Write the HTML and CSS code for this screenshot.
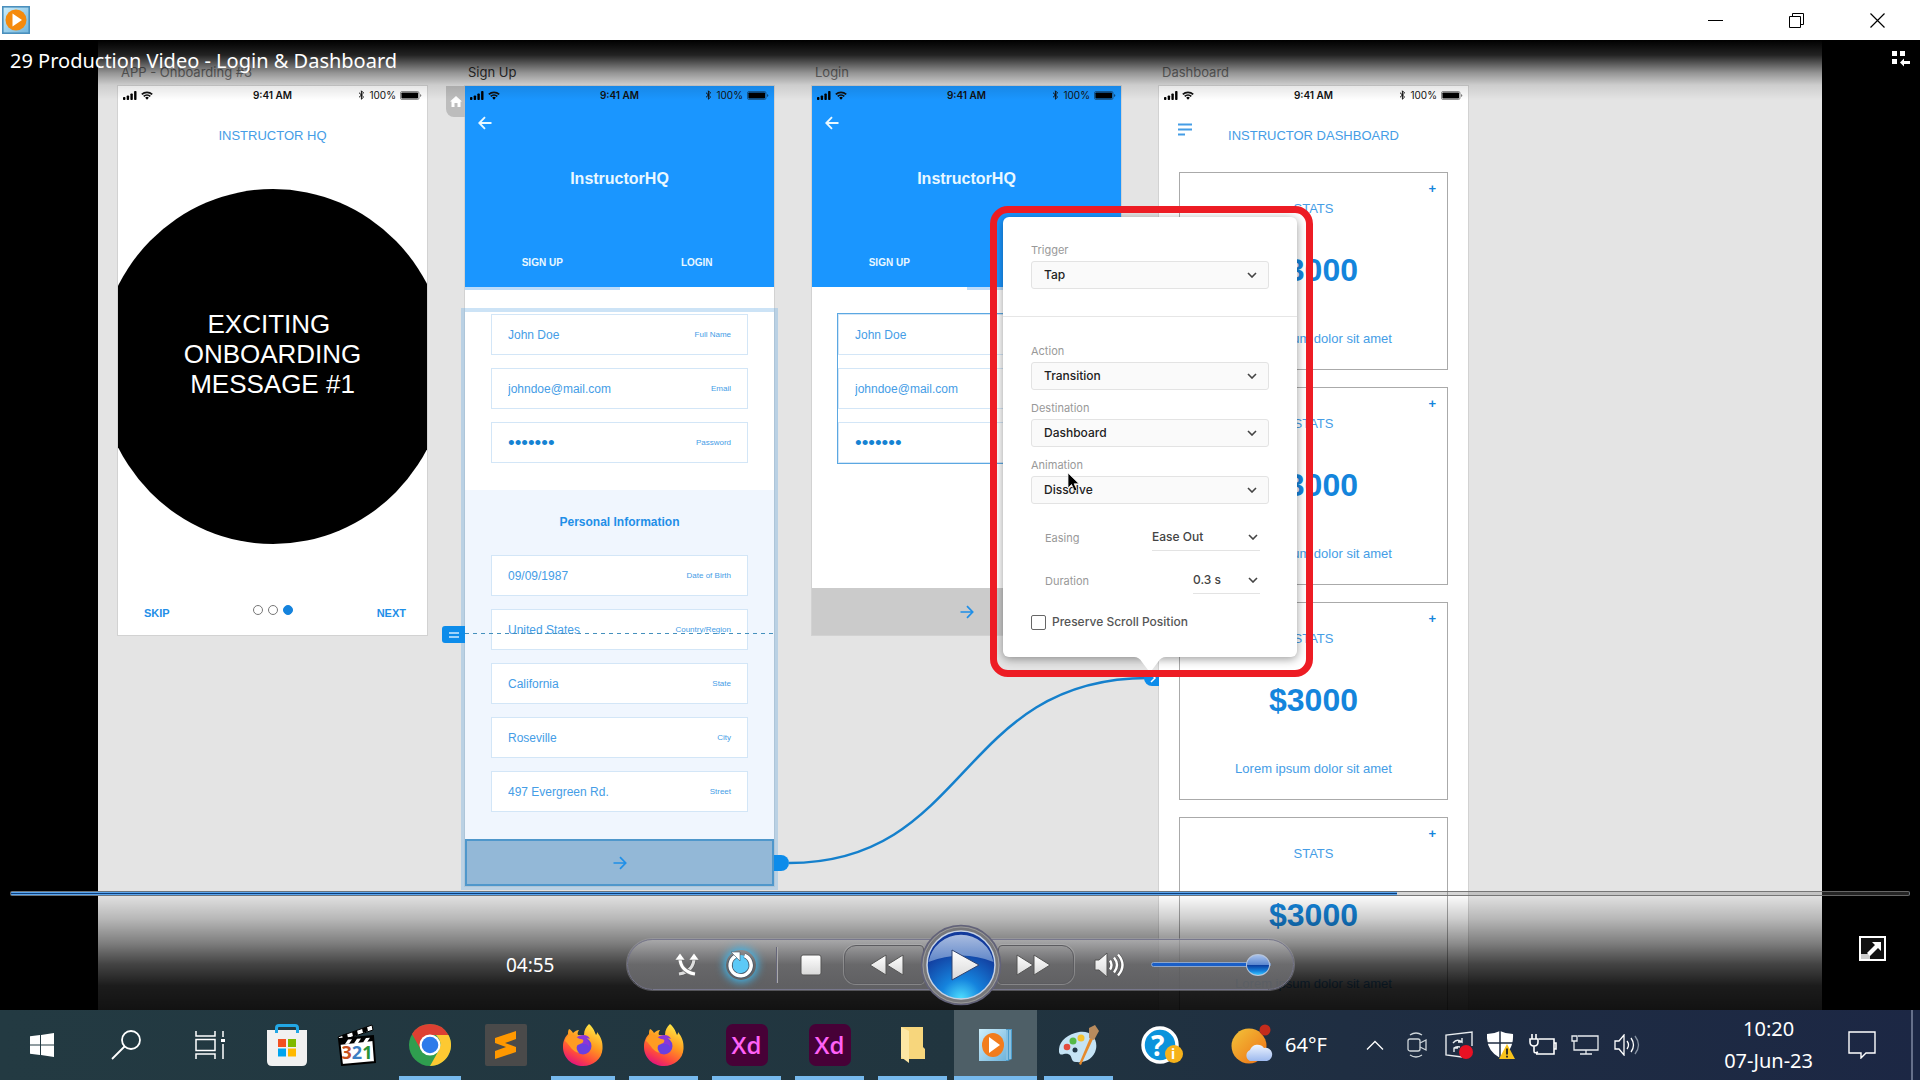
FILE: index.html
```html
<!DOCTYPE html>
<html lang="en">
<head>
    <meta charset="UTF-8">
    <meta name="viewport" content="width=device-width, initial-scale=1.0">
    <title>29 Production Video - Login &amp; Dashboard</title>
    <link rel="stylesheet" href="styles.css">
</head>
<body>
    <!-- shared icons -->
    <svg class="sprite" aria-hidden="true">
        <defs>
            <linearGradient id="gWhite" x1="0" y1="0" x2="0" y2="1"><stop offset="0" stop-color="#fff"/><stop offset="1" stop-color="#d8d8d8"/></linearGradient>
            <linearGradient id="gTop" x1="0" y1="0" x2="0" y2="1"><stop offset="0" stop-color="#a9bce0"/><stop offset="1" stop-color="#5f86c8"/></linearGradient>
            <radialGradient id="gBlue" cx=".5" cy="1" r=".75"><stop offset="0" stop-color="#4fe0ff"/><stop offset=".4" stop-color="#1583dd"/><stop offset="1" stop-color="#123a9c"/></radialGradient>
            <linearGradient id="gOrange" x1="0" y1="0" x2="1" y2="1"><stop offset="0" stop-color="#f2c43a"/><stop offset="1" stop-color="#ee6f14"/></linearGradient>
            <linearGradient id="gFox" x1=".8" y1="0" x2=".3" y2="1"><stop offset="0" stop-color="#fff04a"/><stop offset=".45" stop-color="#ff9a1f"/><stop offset=".75" stop-color="#ff4a3d"/><stop offset="1" stop-color="#e2117f"/></linearGradient>
            <linearGradient id="gCyan" x1="0" y1="0" x2="1" y2="1"><stop offset="0" stop-color="#cdeefb"/><stop offset="1" stop-color="#6fb4dc"/></linearGradient>
            <linearGradient id="gCloud" x1="0" y1="0" x2="0" y2="1"><stop offset="0" stop-color="#eef5ff"/><stop offset="1" stop-color="#9db9ee"/></linearGradient>
        </defs>
        <symbol id="signal" viewBox="0 0 14 9"><rect y="6" width="2.4" height="3" rx=".8"/><rect x="3.7" y="4.5" width="2.4" height="4.5" rx=".8"/><rect x="7.4" y="2.5" width="2.4" height="6.5" rx=".8"/><rect x="11.1" width="2.4" height="9" rx=".8"/></symbol>
        <symbol id="wifi" viewBox="0 0 12 9"><path d="M0.8 3.4A7.6 7.6 0 0 1 11.2 3.4M2.7 5.4A4.8 4.8 0 0 1 9.3 5.4" fill="none" stroke="currentColor" stroke-width="1.7"/><path d="M4.2 6.7a2.6 2.6 0 0 1 3.6 0L6 8.8z"/></symbol>
        <symbol id="bluetooth" viewBox="0 0 7 10"><path d="M1 2.7 5.6 7 3.4 9.2V.8L5.6 3 1 7.3" fill="none" stroke="currentColor"/></symbol>
        <symbol id="battery" viewBox="0 0 22 9"><rect x=".5" y=".5" width="18.5" height="8" rx="1.5" fill="none" stroke="currentColor" stroke-opacity=".45"/><rect x="1.4" y="1.4" width="16.7" height="6.2" rx=".8"/><path d="M20 3v3q1.4-.6 1.4-1.5T20 3z" opacity=".5"/></symbol>
        <symbol id="back" viewBox="0 0 14 14"><path d="M13.5 7H1.5M7 1.2 1.3 7 7 12.8" fill="none" stroke="currentColor" stroke-width="1.9"/></symbol>
        <symbol id="go" viewBox="0 0 14 14"><path d="M.5 7h12M7 1.2 12.7 7 7 12.8" fill="none" stroke="currentColor" stroke-width="1.7"/></symbol>
        <symbol id="chevron" viewBox="0 0 10 6"><path d="M1 1l4 4 4-4" fill="none" stroke="#444" stroke-width="1.6"/></symbol>
        <symbol id="fox" viewBox="0 0 40 42">
            <path d="M26 0c5 4 6 9 7 11 1-1 1-2 1-3 4 5 6 10 5.500 17C39 35 30 42 20 42 9 42 0 34 0 23 0 17 2 13 5 10c0-2 0-3 1-5 2 1 3 2 4 4 2-2 4-3 6-3-1 2-2 3-1 5l6 0c0-5 2-8 5-11z" fill="url(#gFox)"/>
            <circle cx="20" cy="22" r="8.500" fill="#6a3fe0"/>
            <path d="M13 14c4-4 12-4 14 1-3-1-4 0-4 0 3 2 4 5 3 8-2-4-5-3-8-3-3 1-7 0-9-3 3 1 5 0 4-3z" fill="#8c36d8"/>
            <path d="M2 17c1-5 4-6 7-6 3 0 5 3 8 4 3 0 4 1 3 3-1 2-5 2-6 4-1 2 0 5 2 7-7-1-9-8-14-12z" fill="#ff9c23"/>
        </symbol>
        <symbol id="xd" viewBox="0 0 42 42"><rect width="42" height="42" rx="7" fill="#470137"/></symbol>
    </svg>

    <header class="titlebar">
        <svg class="app-icon" width="28" height="28" viewBox="0 0 28 28"><rect x=".8" y=".8" width="26.400" height="26.400" fill="url(#gCyan)" stroke="#4a8fbd" stroke-width="1.600"/><circle cx="14" cy="14" r="10.500" fill="#f58a0c"/><path d="M10.500 7.500v13L20 14z" fill="#fff"/></svg>
        <div class="window-buttons">
            <button aria-label="Minimize"><svg width="15" height="15"><path d="M0 7.500h15" stroke="#000"/></svg></button>
            <button aria-label="Restore"><svg width="15" height="15" fill="none" stroke="#000"><path d="M.5 3.500h11v11H.5zM3.500 3.500V.5h11v11h-3"/></svg></button>
            <button aria-label="Close"><svg width="15" height="15"><path d="M.5.5l14 14M14.500.5l-14 14" stroke="#000" stroke-width="1.200"/></svg></button>
        </div>
    </header>

    <main class="player">
        <div class="canvas">
            <section class="column">
                <h2 class="board-name">APP - Onboarding #3</h2>
                <div class="board onboarding">
                    <div class="status">
                        <span class="status-side"><svg width="14" height="9"><use href="#signal"/></svg><svg width="12" height="9"><use href="#wifi"/></svg></span>
                        <b>9:41 AM</b>
                        <span class="status-side end"><svg width="7" height="10"><use href="#bluetooth"/></svg>100%<svg width="22" height="9"><use href="#battery"/></svg></span>
                    </div>
                    <h3 class="board-title">INSTRUCTOR HQ</h3>
                    <div class="disc"><p>EXCITING&nbsp;<br>ONBOARDING<br>MESSAGE #1</p></div>
                    <div class="onboarding-nav">
                        <a href="#">SKIP</a>
                        <span class="dots"><i></i><i></i><i class="on"></i></span>
                        <a href="#">NEXT</a>
                    </div>
                </div>
            </section>

            <section class="column">
                <h2 class="board-name current">Sign Up</h2>
                <div class="board signup">
                    <div class="hero">
                        <div class="status">
                            <span class="status-side"><svg width="14" height="9"><use href="#signal"/></svg><svg width="12" height="9"><use href="#wifi"/></svg></span>
                            <b>9:41 AM</b>
                            <span class="status-side end"><svg width="7" height="10"><use href="#bluetooth"/></svg>100%<svg width="22" height="9"><use href="#battery"/></svg></span>
                        </div>
                        <button class="back" aria-label="Back"><svg width="14" height="14"><use href="#back"/></svg></button>
                        <h3 class="brand">InstructorHQ</h3>
                        <nav class="tabs"><a href="#">SIGN UP</a><a href="#">LOGIN</a></nav>
                    </div>
                    <div class="indicator"></div>
                    <form class="fields account">
                        <div class="field"><input id="name" value="John Doe"><label for="name">Full Name</label></div>
                        <div class="field"><input id="email" value="johndoe@mail.com"><label for="email">Email</label></div>
                        <div class="field"><input id="pass" type="password" value="1234567"><label for="pass">Password</label></div>
                    </form>
                    <form class="fields personal">
                        <h4>Personal Information</h4>
                        <div class="field"><input id="birth" value="09/09/1987"><label for="birth">Date of Birth</label></div>
                        <div class="field"><input id="country" value="United States"><label for="country">Country/Region</label></div>
                        <div class="field"><input id="state" value="California"><label for="state">State</label></div>
                        <div class="field"><input id="city" value="Roseville"><label for="city">City</label></div>
                        <div class="field"><input id="street" value="497 Evergreen Rd."><label for="street">Street</label></div>
                    </form>
                    <button class="submit selected" aria-label="Continue"><svg width="14" height="14"><use href="#go"/></svg></button>
                    <div class="selection"></div>
                    <div class="fold"></div>
                    <div class="fold-handle"><svg width="10" height="6"><path d="M0 1h10M0 5h10" stroke="#cfeaff" stroke-width="1.500"/></svg></div>
                    <div class="home-tab"><svg width="12" height="11" viewBox="0 0 12 11"><path d="M6 0l6 5.500h-1.500V11h-3V7h-3v4h-3V5.500H0z" fill="#fff"/></svg></div>
                </div>
            </section>

            <section class="column">
                <h2 class="board-name">Login</h2>
                <div class="board login">
                    <div class="hero">
                        <div class="status">
                            <span class="status-side"><svg width="14" height="9"><use href="#signal"/></svg><svg width="12" height="9"><use href="#wifi"/></svg></span>
                            <b>9:41 AM</b>
                            <span class="status-side end"><svg width="7" height="10"><use href="#bluetooth"/></svg>100%<svg width="22" height="9"><use href="#battery"/></svg></span>
                        </div>
                        <button class="back" aria-label="Back"><svg width="14" height="14"><use href="#back"/></svg></button>
                        <h3 class="brand">InstructorHQ</h3>
                        <nav class="tabs"><a href="#">SIGN UP</a></nav>
                    </div>
                    <div class="indicator right"></div>
                    <form class="fields account">
                        <div class="group">
                            <div class="field"><input aria-label="Full Name" value="John Doe"></div>
                            <div class="field"><input aria-label="Email" value="johndoe@mail.com"></div>
                            <div class="field"><input aria-label="Password" type="password" value="1234567"></div>
                        </div>
                    </form>
                    <button class="submit" aria-label="Continue"><svg width="14" height="14"><use href="#go"/></svg></button>
                </div>
            </section>

            <section class="column">
                <h2 class="board-name">Dashboard</h2>
                <div class="board dashboard">
                    <div class="status">
                        <span class="status-side"><svg width="14" height="9"><use href="#signal"/></svg><svg width="12" height="9"><use href="#wifi"/></svg></span>
                        <b>9:41 AM</b>
                        <span class="status-side end"><svg width="7" height="10"><use href="#bluetooth"/></svg>100%<svg width="22" height="9"><use href="#battery"/></svg></span>
                    </div>
                    <h3 class="board-title">INSTRUCTOR DASHBOARD</h3>
                    <button class="menu" aria-label="Menu"><svg width="14" height="13"><path d="M0 1.500h14M0 6.500h14M0 11.500h7" stroke="#459de6" stroke-width="1.800"/></svg></button>
                    <div class="cards">
                        <article class="card"><button aria-label="Add">+</button><h4>STATS</h4><strong>$3000</strong><p>Lorem ipsum dolor sit amet</p></article>
                        <article class="card"><button aria-label="Add">+</button><h4>STATS</h4><strong>$3000</strong><p>Lorem ipsum dolor sit amet</p></article>
                        <article class="card"><button aria-label="Add">+</button><h4>STATS</h4><strong>$3000</strong><p>Lorem ipsum dolor sit amet</p></article>
                        <article class="card"><button aria-label="Add">+</button><h4>STATS</h4><strong>$3000</strong><p>Lorem ipsum dolor sit amet</p></article>
                    </div>
                </div>
            </section>

            <!-- prototype wire from the submit button to the dashboard -->
            <svg class="wire" width="400" height="240" viewBox="0 0 400 240">
                <path d="M19 203C200 203 188 18 378 18" fill="none" stroke="#1580cc" stroke-width="2.500"/>
                <path d="M4 195h7a8 8 0 0 1 0 16H4z" fill="#0d8cea"/>
                <path d="M389 10h-7a8 8 0 0 0 0 16h7z" fill="#0d8cea"/>
                <path d="M381 14l4 4-4 4" fill="none" stroke="#fff" stroke-width="1.500"/>
            </svg>

            <form class="popover">
                <div class="popover-section">
                    <label for="trigger">Trigger</label>
                    <div class="select"><select id="trigger"><option>Tap</option></select><svg width="10" height="6"><use href="#chevron"/></svg></div>
                </div>
                <div class="popover-section">
                    <label for="action">Action</label>
                    <div class="select"><select id="action"><option>Transition</option></select><svg width="10" height="6"><use href="#chevron"/></svg></div>
                    <label for="destination">Destination</label>
                    <div class="select"><select id="destination"><option>Dashboard</option></select><svg width="10" height="6"><use href="#chevron"/></svg></div>
                    <label for="animation">Animation</label>
                    <div class="select"><select id="animation"><option>Dissolve</option></select><svg width="10" height="6"><use href="#chevron"/></svg></div>
                    <div class="option">
                        <label for="easing">Easing</label>
                        <div class="select line"><select id="easing"><option>Ease Out</option></select><svg width="10" height="6"><use href="#chevron"/></svg></div>
                    </div>
                    <div class="option">
                        <label for="duration">Duration</label>
                        <div class="select line short"><select id="duration"><option>0.3 s</option></select><svg width="10" height="6"><use href="#chevron"/></svg></div>
                    </div>
                    <div class="check"><input type="checkbox" id="preserve"><label for="preserve">Preserve Scroll Position</label></div>
                </div>
                <svg class="tip" width="32" height="15"><path d="M0 0h32q-5 0-8 5l-6 8q-2 3-4 0L8 5Q5 0 0 0z" fill="#fff"/></svg>
                <svg class="cursor" width="14" height="20" viewBox="0 0 14 20"><path d="M1 1v15l3.500-3.500L7.500 19l2.500-1.200-2.900-6H12z" fill="#000" stroke="#eee" stroke-width=".8"/></svg>
            </form>
            <div class="highlight"></div>
        </div>

        <div class="top-overlay">
            <h1>29 Production Video - Login &amp; Dashboard</h1>
            <button class="library" aria-label="Switch to library"><svg width="18" height="16" fill="#fff"><path d="M0 0h5v5H0zM8 0h5v5H8zM0 8h5v5H0zM8 11.500 12 7.500v2.500h6v3h-6v2.500z"/></svg></button>
        </div>

        <div class="bottom-overlay">
            <input class="seek" type="range" min="0" max="1000" value="732" aria-label="Seek">
            <div class="control-row">
                <time>04:55</time>
                <div class="controls">
                    <div class="modes">
                        <button aria-label="Shuffle"><svg width="26" height="26" viewBox="0 0 26 26"><g fill="none" stroke="#555" stroke-width="4.500"><path d="M20 6c0 7-4 14-15 16M6 6c0 7 4 14 15 16"/></g><path d="M20 6c0 7-4 14-15 16" fill="none" stroke="#ddd" stroke-width="3.200"/><path d="M6 6c0 7 4 14 15 16" fill="none" stroke="#777" stroke-width="5"/><path d="M6 6c0 7 4 14 15 16" fill="none" stroke="#fff" stroke-width="3.200"/><path d="M6 1l5 7H1zM20 1l5 7H15z" fill="#fff" stroke="#666" stroke-width=".5"/></svg></button>
                        <button class="repeat" aria-label="Repeat"><svg width="30" height="30" viewBox="0 0 30 30"><circle cx="15" cy="15" r="10" fill="#5cc9f7"/><path d="M18.500 5.500a10.500 10.500 0 1 1-9 .6" fill="none" stroke="#456" stroke-width="5"/><path d="M18.500 5.500a10.500 10.500 0 1 1-9 .6" fill="none" stroke="#fff" stroke-width="3.500"/><path d="M5 2h9v9z" fill="#fff" stroke="#456" stroke-width=".6"/></svg></button>
                    </div>
                    <span class="divider"></span>
                    <button class="stop" aria-label="Stop"><svg width="22" height="22"><rect x="1" y="1" width="20" height="20" rx="2" fill="url(#gWhite)" stroke="#555"/></svg></button>
                    <div class="transport">
                        <button class="skip prev" aria-label="Previous"><svg width="36" height="22"><path d="M17 1v20L1 11zM34 1v20L18 11z" fill="url(#gWhite)" stroke="#555"/></svg></button>
                        <button class="play" aria-label="Play"><svg width="82" height="82" viewBox="0 0 82 82"><circle cx="41" cy="41" r="39.500" fill="#77777a" stroke="#62627a" stroke-width="1.500"/><circle cx="41" cy="41" r="38" fill="none" stroke="#bbb" stroke-opacity=".5"/><circle cx="41" cy="41" r="34" fill="url(#gBlue)" stroke="#c6d2e4" stroke-width="1.500"/><path d="M8.500 38a33 33 0 0 1 65 0q-32-13-65 0z" fill="url(#gTop)"/><path d="M32 26v30l27-15z" fill="url(#gWhite)" stroke="#31436f"/></svg></button>
                        <button class="skip next" aria-label="Next"><svg width="36" height="22"><path d="M2 1v20l16-10zM19 1v20l16-10z" fill="url(#gWhite)" stroke="#555"/></svg></button>
                    </div>
                    <button class="volume" aria-label="Mute"><svg width="32" height="26" viewBox="0 0 32 26"><path d="M1 8h4l8-7v24l-8-7H1z" fill="url(#gWhite)" stroke="#555"/><path d="M16 8.500q3 4.500 0 9M20 5.500q6 7.500 0 15M24 2.500q9 10.500 0 21" fill="none" stroke="#555" stroke-width="3.600"/><path d="M16 8.500q3 4.500 0 9M20 5.500q6 7.500 0 15M24 2.500q9 10.500 0 21" fill="none" stroke="#fff" stroke-width="2.400"/></svg></button>
                    <input class="volume-slider" type="range" min="0" max="100" value="100" aria-label="Volume">
                </div>
                <button class="fullscreen" aria-label="Exit full screen"><svg width="27" height="25"><rect x="1" y="1" width="25" height="23" fill="#111" stroke="#fff" stroke-width="2"/><rect x="2" y="18" width="9" height="5" fill="#ccc"/><path d="M8 17l8-8-3-3h9v9l-3-3-8 8z" fill="#fff"/></svg></button>
            </div>
        </div>
    </main>

    <footer class="taskbar">
        <div class="apps">
            <button aria-label="Start"><svg width="24" height="24" fill="#fff"><path d="M0 3.300 10 2v9.500H0zM11 1.900 24 0v11.500H11zM0 12.500h10V22L0 20.700zM11 12.500h13V24l-13-1.900z"/></svg></button>
            <button aria-label="Search"><svg width="30" height="30" fill="none" stroke="#fff" stroke-width="1.800"><circle cx="20" cy="10" r="9"/><path d="M13.500 16.500 1 29"/></svg></button>
            <button aria-label="Task View"><svg width="30" height="28" fill="none" stroke="#fff" stroke-width="1.500"><path d="M1 0v5h19V0M1 8.500h19v11H1zM1 28v-5h19v5M28 0v6M28 13v15"/><path d="M26 8h4v3h-4z" fill="#fff" stroke="none"/></svg></button>
            <button aria-label="Microsoft Store"><svg width="40" height="42"><path d="M0 6h40v31q0 5-5 5H5q-5 0-5-5z" fill="#f1f1f1"/><path d="M9.500 9V4q0-2.500 2.500-2.500h16q2.500 0 2.500 2.500v5" fill="none" stroke="#22a7e5" stroke-width="3"/><path d="M11 15h8v8h-8z" fill="#f25022"/><path d="M21 15h8v8h-8z" fill="#7fba00"/><path d="M11 24.500h8v8h-8z" fill="#00a4ef"/><path d="M21 24.500h8v8h-8z" fill="#ffb900"/></svg></button>
            <button class="clapper" aria-label="Media Player Classic"><svg width="40" height="42" viewBox="0 0 40 42"><path d="M1 13 35 1l1 5L3 17z" fill="#fff" stroke="#000"/><path d="M5 11l5-1.700 1 4.600-5 1.700zM15 8l5-1.700 1 4.500-5 1.700zM25 4.500l5-1.700 1 4.500-5 1.700z"/><path d="M2 15l34-3 2 26-33 3z" fill="#fff" stroke="#000" stroke-width="2"/><path d="M2 15l34-3v5L2 21z"/><path d="M11 15.500l4-.3-3 4.500-4 .3zM20 14.800l4-.3-3 4.500-4 .3zM29 14l4-.3-3 4.500-4 .3z" fill="#fff"/></svg><span><i>3</i><i>2</i><i>1</i></span></button>
            <button class="open" aria-label="Chrome"><svg width="42" height="42" viewBox="0 0 42 42"><circle cx="21" cy="21" r="21" fill="#2f9e4f"/><path d="M21 0a21 21 0 0 1 18.500 11H21L12 26 3 10A21 21 0 0 1 21 0z" fill="#dd4032"/><path d="M39.500 11A21 21 0 0 1 21 42l9-16q4-8-3-15z" fill="#fdc932"/><circle cx="21" cy="21" r="10.500" fill="#fff"/><circle cx="21" cy="21" r="8.300" fill="#2e7bea"/></svg></button>
            <button aria-label="Sublime Text"><svg width="42" height="42"><rect width="42" height="42" rx="2" fill="#4a4a4a"/><path d="M10 14 31 7v8l-11 4 11 4v5L10 35v-8l11-4-11-4z" fill="#ff9800"/></svg></button>
            <button class="open" aria-label="Firefox"><svg width="40" height="42"><use href="#fox"/></svg></button>
            <button class="open" aria-label="Firefox"><svg width="40" height="42"><use href="#fox"/></svg></button>
            <button class="open xd" aria-label="Adobe XD"><svg width="42" height="42"><use href="#xd"/></svg><span>Xd</span></button>
            <button class="open xd" aria-label="Adobe XD"><svg width="42" height="42"><use href="#xd"/></svg><span>Xd</span></button>
            <button class="open" aria-label="File Explorer"><svg width="26" height="38"><path d="M1 1h22v20l2 2v10H1z" fill="#f7d67c"/><path d="M1 1l8 4v32l-8-6z" fill="#fde7a4"/></svg></button>
            <button class="open active" aria-label="Windows Media Player"><svg width="34" height="34"><path d="M5 1h28v30l-4 2H5z" fill="#4c9ccb"/><path d="M28 2v30M31 2v29" stroke="#c4e6f7"/><rect width="27" height="32" y="1" fill="url(#gCyan)"/><ellipse cx="14" cy="17" rx="11" ry="12" fill="#f27c1c"/><path d="M10 9v16l11-8z" fill="#fff"/></svg></button>
            <button class="open" aria-label="Paint"><svg width="40" height="40" viewBox="0 0 40 40"><path d="M20 7c12-2 19 7 17 17-2 9-10 14-20 13-6 0-3-7-8-8-4-1-8 3-9-2C-1 17 8 9 20 7z" fill="#c5e3f5"/><circle cx="8" cy="22" r="3.300" fill="#e34a3d"/><circle cx="14" cy="16" r="3.500" fill="#55b948"/><circle cx="22" cy="13" r="3.500" fill="#f5c22e"/><circle cx="16" cy="25" r="2.500" fill="#23384a"/><path d="M31 13l3 1-12 26-2-1z" fill="#e58a2c"/><path d="M30 3l6-3 4 6-5 9-5-2z" fill="#b98b5d"/></svg></button>
            <button class="help" aria-label="Get Help"><svg width="42" height="42" viewBox="0 0 42 42"><circle cx="19" cy="21" r="17" fill="#0b93dc" stroke="#fff" stroke-width="3.500"/><circle cx="33" cy="30" r="9" fill="#f6b21b"/></svg><b>?</b><i>i</i></button>
        </div>

        <a class="weather" href="#"><svg width="42" height="42" viewBox="0 0 42 42"><circle cx="18" cy="22" r="17.500" fill="url(#gOrange)"/><circle cx="34" cy="6" r="5.500" fill="#c42b1c"/><path d="M19 37a6 6 0 0 1 0-11 8 8 0 0 1 14-2 6 6 0 0 1 3 13z" fill="url(#gCloud)"/></svg>64°F</a>

        <div class="tray">
            <button aria-label="Show hidden icons"><svg width="18" height="10" fill="none" stroke="#fff" stroke-width="1.300"><path d="M1 9.500l8-8 8 8"/></svg></button>
            <button aria-label="Meet Now"><svg width="20" height="26" fill="none" stroke="#cfd6da" stroke-width="1.300"><rect x="1" y="7" width="12" height="12" rx="2"/><path d="M13 11l6-3v10l-6-3M3 3q6-4 12 0M3 23q6 4 12 0"/></svg></button>
            <button aria-label="Update"><svg width="28" height="28" fill="none" stroke="#e8ecef" stroke-width="1.400"><path d="M17 26 1 24V4l26-3v14M8 12q4-5 9-1v-4M17 11h-4M15 16q-4-1-6 1v4M9 17h4"/><circle cx="21" cy="21" r="7" fill="#e81123" stroke="none"/></svg></button>
            <button aria-label="Security"><svg width="28" height="28"><path d="M13 0q6 3 13 3 1 17-13 24Q-1 20 0 3q7 0 13-3z" fill="#fff"/><path d="M13 0v27M0 12h26" stroke="#1f2d42" stroke-width="1.500"/><path d="M20 13l8 15H12z" fill="#f9c31b"/><path d="M20 17.500v6M20 24.800v1.800" stroke="#222" stroke-width="1.800"/></svg></button>
            <button aria-label="Battery"><svg width="28" height="22" fill="none" stroke="#fff" stroke-width="1.600"><path d="M10 5h15v15H7M25 9h2v6h-2M3 0v5M7 0v5M1 5h8v3q0 4-4 4t-4-4zM5 12v5q0 3 4 1"/></svg></button>
            <button aria-label="Network"><svg width="28" height="20" fill="none" stroke="#e8ecef" stroke-width="1.300"><path d="M7 1h20v14H3v-5M15 15v4M9 19h12M1 1h5v5H1zM3 6v4"/></svg></button>
            <button aria-label="Volume"><svg width="27" height="22" fill="none" stroke="#fff" stroke-width="1.300"><path d="M1 7h4l5-6v20l-5-6H1zM13 7q3 4 0 8M17 4q5 7 0 14"/><path d="M21 2q7 9 0 18" stroke="#8793a3"/></svg></button>
        </div>

        <div class="tray-end">
            <div class="clock"><span>10:20</span><span>07-Jun-23</span></div>
            <button class="notifications" aria-label="Notifications"><svg width="28" height="28" fill="none" stroke="#fff" stroke-width="1.400"><path d="M1 1h26v21h-9l-5 5v-5H1z"/></svg></button>
            <button class="show-desktop" aria-label="Show desktop"></button>
        </div>
    </footer>
</body>
</html>
```
FILE: styles.css
```css
* {
    box-sizing: border-box;
}
body {
    margin: 0;
    height: 100vh;
    overflow: hidden;
    display: flex;
    flex-direction: column;
    background: #000;
    font-family: "Liberation Sans", Arial, sans-serif;
}
h1, h2, h3, h4, p {
    margin: 0;
    font-weight: normal;
}
button {
    border: none;
    background: none;
    padding: 0;
    display: flex;
    align-items: center;
    justify-content: center;
}
a {
    color: inherit;
    text-decoration: none;
}
svg {
    flex: none;
}
.sprite {
    position: absolute;
    width: 0;
    height: 0;
}

/* window title bar */
.titlebar {
    height: 40px;
    flex: none;
    display: flex;
    align-items: center;
    justify-content: space-between;
    padding: 0 2px;
    background: #fff;
}
.window-buttons {
    display: flex;
}
.window-buttons button {
    width: 81px;
    height: 40px;
}

/* video */
.player {
    flex: 1;
    min-height: 0;
    position: relative;
    overflow: hidden;
}
.canvas {
    position: relative;
    height: 100%;
    margin: 0 98px;
    padding: 24px 20px 0;
    display: flex;
    align-items: flex-start;
    gap: 38px;
    overflow: hidden;
    background: #e4e4e4;
}
.column {
    width: 309px;
    flex: none;
}
.board-name {
    padding-left: 3px;
    margin-bottom: 6px;
    font: 400 13px/16px Inter, sans-serif;
    color: #777;
}
.board-name.current {
    color: #333;
}
.board {
    position: relative;
    display: flex;
    flex-direction: column;
    background: #fff;
    box-shadow: 0 0 0 1px #d2d2d2;
    color: #459de6;
}
.onboarding, .login {
    height: 549px;
}
.onboarding {
    overflow: hidden;
}
.status {
    height: 18px;
    display: grid;
    grid-template-columns: 1fr auto 1fr;
    align-items: center;
    padding: 0 5px;
    font: 10px/18px Inter, sans-serif;
    color: #111;
}
.status b {
    font-weight: 600;
}
.status-side {
    display: flex;
    align-items: center;
    gap: 4px;
}
.status-side.end {
    justify-content: flex-end;
}
.board-title {
    margin-top: 22px;
    font-size: 13px;
    line-height: 20px;
    text-align: center;
}
.disc {
    width: 348px;
    height: 355px;
    margin: 43px 0 0;
    align-self: center;
    flex: none;
    border-radius: 50%;
    background: #000;
    color: #fff;
    display: flex;
    align-items: center;
    justify-content: center;
    text-align: center;
    font-size: 26px;
    line-height: 30px;
}
.disc p {
    padding-bottom: 26px;
}
.onboarding-nav {
    margin-top: 60px;
    padding: 0 21px 0 26px;
    display: flex;
    justify-content: space-between;
    align-items: center;
    font-size: 11px;
    line-height: 18px;
    font-weight: bold;
    color: #1f8fe8;
}
.dots {
    display: flex;
    gap: 5px;
    padding-bottom: 6px;
}
.dots i {
    width: 10px;
    height: 10px;
    border: 1px solid #777;
    border-radius: 50%;
}
.dots .on {
    border-color: #1583dd;
    background: #1583dd;
}

/* sign up and login artboards */
.hero {
    height: 201px;
    flex: none;
    display: flex;
    flex-direction: column;
    background: #1a96ff;
    color: #e9f8ff;
}
.back {
    width: 40px;
    height: 37px;
    color: #e9f8ff;
}
.brand {
    margin-top: 28px;
    font-size: 16px;
    line-height: 20px;
    font-weight: bold;
    text-align: center;
}
.tabs {
    margin-top: auto;
    padding-bottom: 16px;
    display: grid;
    grid-template-columns: 1fr 1fr;
    text-align: center;
    font-size: 10px;
    line-height: 16px;
    font-weight: bold;
}
.indicator {
    width: 50%;
    height: 3px;
    background: #bddcfa;
}
.indicator.right {
    align-self: flex-end;
}
.fields {
    display: flex;
    flex-direction: column;
    gap: 13px;
    padding: 24px 26px 27px;
}
.field {
    height: 41px;
    padding: 0 16px;
    display: flex;
    align-items: center;
    border: 1px solid #d3e6f7;
    background: #fff;
}
.field input {
    flex: 1;
    min-width: 0;
    padding: 0;
    border: none;
    background: none;
    font: 12px/16px "Liberation Sans", Arial, sans-serif;
    color: #459de6;
}
.field input[type="password"] {
    font-size: 19px;
    color: #1583d3;
}
.field label {
    font-size: 8px;
    line-height: 12px;
}
.personal {
    background: #f0f6fe;
}
.personal h4 {
    margin-bottom: 12px;
    font-size: 12px;
    line-height: 16px;
    font-weight: bold;
    text-align: center;
    color: #1f8fe8;
}
.group {
    display: flex;
    flex-direction: column;
    gap: 13px;
    box-shadow: 0 0 0 1px #5ba8e2;
}
.submit {
    height: 47px;
    flex: none;
    margin-top: auto;
    background: #cbcbcb;
    color: #1f8fe8;
}
.submit.selected {
    background: #93b8d7;
    border: 2px solid #4f97cb;
}
.selection {
    position: absolute;
    top: 222px;
    left: -4px;
    right: -4px;
    bottom: -4px;
    border: 4px solid rgba(110, 175, 230, 0.35);
    pointer-events: none;
}
.fold {
    position: absolute;
    top: 547px;
    left: 0;
    right: 0;
    height: 1px;
    background: repeating-linear-gradient(90deg, #4590bd 0 4px, transparent 4px 8px);
}
.fold-handle {
    position: absolute;
    top: 540px;
    left: -23px;
    width: 23px;
    height: 17px;
    border-radius: 3px 0 0 3px;
    background: #0d8cea;
    display: flex;
    align-items: center;
    justify-content: center;
}
.home-tab {
    position: absolute;
    top: 0;
    left: -19px;
    width: 19px;
    height: 31px;
    border-radius: 0 0 0 8px;
    background: #bdbdbd;
    display: flex;
    align-items: center;
    justify-content: center;
}

/* dashboard artboard */
.menu {
    position: absolute;
    top: 37px;
    left: 19px;
}
.cards {
    display: flex;
    flex-direction: column;
    gap: 17px;
    padding: 26px 20px;
}
.card {
    position: relative;
    height: 198px;
    padding-top: 26px;
    border: 1px solid #aaa;
    display: flex;
    flex-direction: column;
    text-align: center;
    font-size: 13px;
    line-height: 20px;
}
.card h4 {
    font-size: 13px;
}
.card strong {
    margin: 31px 0 39px;
    font-size: 32px;
    line-height: 40px;
    color: #1485dc;
}
.card button {
    position: absolute;
    top: 8px;
    right: 11px;
    font: bold 13px/16px "Liberation Sans", Arial, sans-serif;
    color: #1485dc;
}

.wire {
    position: absolute;
    top: 620px;
    left: 672px;
}

/* interaction popover */
.popover {
    position: absolute;
    top: 177px;
    left: 905px;
    width: 294px;
    border-radius: 6px;
    background: #fff;
    box-shadow: 0 2px 10px rgba(0, 0, 0, 0.4);
    font: 500 12px/16px Inter, sans-serif;
    color: #333;
}
.popover-section {
    padding: 25px 28px 27px;
    display: flex;
    flex-direction: column;
}
.popover-section + .popover-section {
    padding-top: 26px;
    border-top: 1px solid #e6e6e6;
}
.popover label {
    margin-bottom: 3px;
    font-size: 11px;
    font-weight: 400;
    color: #999;
}
.select {
    position: relative;
    height: 28px;
    border: 1px solid #e3e3e3;
    border-radius: 3px;
    background: #fafafa;
}
.select + label {
    margin-top: 10px;
}
.select select {
    appearance: none;
    width: 100%;
    height: 100%;
    padding: 0 12px;
    border: none;
    background: none;
    font: inherit;
    color: #222;
}
.select svg {
    position: absolute;
    top: 10px;
    right: 11px;
    pointer-events: none;
}
.option {
    margin-top: 16px;
    padding: 0 9px 0 14px;
    display: flex;
    align-items: center;
    justify-content: space-between;
}
.select + .option {
    margin-top: 20px;
}
.option label {
    margin: 0;
}
.select.line {
    width: 108px;
    height: 27px;
    border-width: 0 0 1px;
    border-radius: 0;
    background: none;
}
.select.line.short {
    width: 67px;
}
.select.line select {
    padding: 0;
    color: #444;
}
.select.line svg {
    right: 2px;
}
.check {
    margin-top: 20px;
    display: flex;
    align-items: center;
    gap: 6px;
}
.check input {
    appearance: none;
    width: 15px;
    height: 15px;
    margin: 0;
    border: 1px solid #666;
    border-radius: 2px;
}
.check label {
    margin: 0;
    font-size: 12px;
    font-weight: 500;
    color: #555;
}
.tip {
    position: absolute;
    top: 100%;
    left: 131px;
}
.cursor {
    position: absolute;
    top: 255px;
    left: 64px;
}
.highlight {
    position: absolute;
    top: 166px;
    left: 892px;
    width: 323px;
    height: 471px;
    border: 7px solid #ed1c24;
    border-radius: 18px;
    pointer-events: none;
}

/* player chrome over the video */
.top-overlay {
    position: absolute;
    top: 0;
    left: 0;
    right: 0;
    height: 60px;
    padding: 8px 10px;
    display: flex;
    justify-content: space-between;
    align-items: flex-start;
    background: linear-gradient(#000, rgba(0, 0, 0, 0.85) 25%, rgba(0, 0, 0, 0.35) 55%, rgba(0, 0, 0, 0.1) 75%, transparent);
}
.top-overlay h1 {
    font: 20px/26px "Noto Sans", sans-serif;
    color: #fff;
}
.library {
    margin-top: 3px;
}
.bottom-overlay {
    position: absolute;
    left: 0;
    right: 0;
    bottom: 0;
    height: 121px;
    background: linear-gradient(transparent 4%, rgba(0, 0, 0, 0.2) 25%, rgba(0, 0, 0, 0.45) 45%, rgba(0, 0, 0, 0.7) 62%, rgba(0, 0, 0, 0.88) 80%, rgba(0, 0, 0, 0.92));
}
.seek {
    appearance: none;
    display: block;
    width: calc(100% - 20px);
    height: 5px;
    margin: 2px 10px 0;
    border: 1px solid rgba(110, 110, 110, 0.9);
    border-radius: 2px;
    background: linear-gradient(90deg, #58a4ee 73%, rgba(120, 120, 120, 0.3) 73%);
}
.seek::-webkit-slider-runnable-track {
    height: 1px;
    background: linear-gradient(90deg, #0b3c78 73%, transparent 73%);
}
.seek::-webkit-slider-thumb {
    appearance: none;
    width: 0;
    height: 0;
}
.control-row {
    display: grid;
    grid-template-columns: 1fr auto 1fr;
    align-items: center;
    padding: 40px 34px 0;
}
.control-row time {
    justify-self: end;
    padding-right: 72px;
    font: 19px/26px "Noto Sans", sans-serif;
    color: #fff;
}
.controls {
    height: 51px;
    padding: 0 22px 0 44px;
    display: flex;
    align-items: center;
    gap: 20px;
    border: 1px solid #77778c;
    border-radius: 26px;
    background: linear-gradient(rgba(190, 190, 192, 0.6), rgba(125, 125, 128, 0.65) 50%, rgba(120, 120, 124, 0.75));
    box-shadow: 0 0 0 1px rgba(170, 170, 180, 0.4);
}
.modes {
    display: flex;
    gap: 24px;
}
.modes button {
    width: 30px;
    height: 30px;
}
.repeat {
    border-radius: 50%;
    box-shadow: 0 0 8px 2px #3fb6ea;
}
.divider {
    width: 2px;
    height: 36px;
    border-left: 1px solid #66667a;
    border-right: 1px solid #aaa;
}
.stop {
    width: 26px;
}
.transport {
    display: flex;
    align-items: center;
}
.skip {
    height: 39px;
    border: 1px solid #5c5c60;
    box-shadow: 0 0 0 1px rgba(190, 190, 190, 0.4);
}
.prev {
    width: 80px;
    padding: 0 6px 0 12px;
    border-radius: 12px 4px 4px 12px;
}
.next {
    width: 76px;
    padding: 0 12px 0 6px;
    border-radius: 4px 12px 12px 4px;
}
/* wider than its slot, so it covers the ends of prev and next */
.play {
    width: 74px;
    height: 82px;
    z-index: 1;
}
.volume {
    width: 32px;
}
.volume-slider {
    appearance: none;
    width: 125px;
    height: 24px;
    margin: 0;
    padding-left: 5px;
    background: none;
}
.volume-slider::-webkit-slider-runnable-track {
    height: 5px;
    border: 1px solid #8fa6c8;
    border-radius: 3px;
    background: #1a5fc8;
}
.volume-slider::-webkit-slider-thumb {
    appearance: none;
    width: 24px;
    height: 22px;
    margin-top: -9px;
    border: 1px solid #b9c6da;
    border-radius: 50%;
    background: linear-gradient(#a9c2ec, #5c88d0 48%, #0c3fa0 52%, #1583dd 80%, #3fc8ff);
}
.fullscreen {
    justify-self: end;
    margin-bottom: 32px;
}

/* taskbar */
.taskbar {
    height: 70px;
    flex: none;
    display: flex;
    background: linear-gradient(90deg, #233a42, #21353f 50%, #1f2e42 70%, #1c2744);
    color: #fff;
    font: 20px/32px "Noto Sans", sans-serif;
}
.taskbar button {
    position: relative;
    height: 70px;
    color: #fff;
}
.apps {
    display: grid;
    grid-template-columns: repeat(3, 84px) repeat(2, 70px) repeat(2, 76px) 78px repeat(7, 83px);
}
.open::after {
    content: "";
    position: absolute;
    left: 7px;
    right: 7px;
    bottom: 0;
    height: 4px;
    background: #76b9ed;
}
.active {
    background: #4e5f67;
}
.active::after {
    left: 0;
    right: 0;
}
.xd span {
    position: absolute;
    font: 600 24px/30px "Open Sans", sans-serif;
    color: #ff61f6;
}
.clapper span {
    position: absolute;
    top: 29px;
    font: bold 18px/26px "Noto Sans", sans-serif;
}
.clapper i {
    font-style: normal;
    color: #c8501e;
}
.clapper i:nth-child(2) {
    color: #3c7fc4;
}
.clapper i:nth-child(3) {
    color: #2a9235;
}
.help b {
    position: absolute;
    top: 18px;
    left: 31px;
    font: bold 28px/34px "Noto Sans", sans-serif;
}
.help i {
    position: absolute;
    top: 34px;
    left: 51px;
    font: bold 14px/20px "Noto Sans", sans-serif;
}
.weather {
    width: 151px;
    padding-left: 28px;
    display: flex;
    align-items: center;
    gap: 12px;
}
.tray {
    display: flex;
}
.tray button {
    width: 42px;
}
.tray-end {
    margin-left: auto;
    display: flex;
}
.clock {
    display: flex;
    flex-direction: column;
    justify-content: center;
    text-align: center;
}
.notifications {
    width: 98px;
}
.show-desktop {
    width: 9px;
    border-left: 2px solid #66708a;
}
```
